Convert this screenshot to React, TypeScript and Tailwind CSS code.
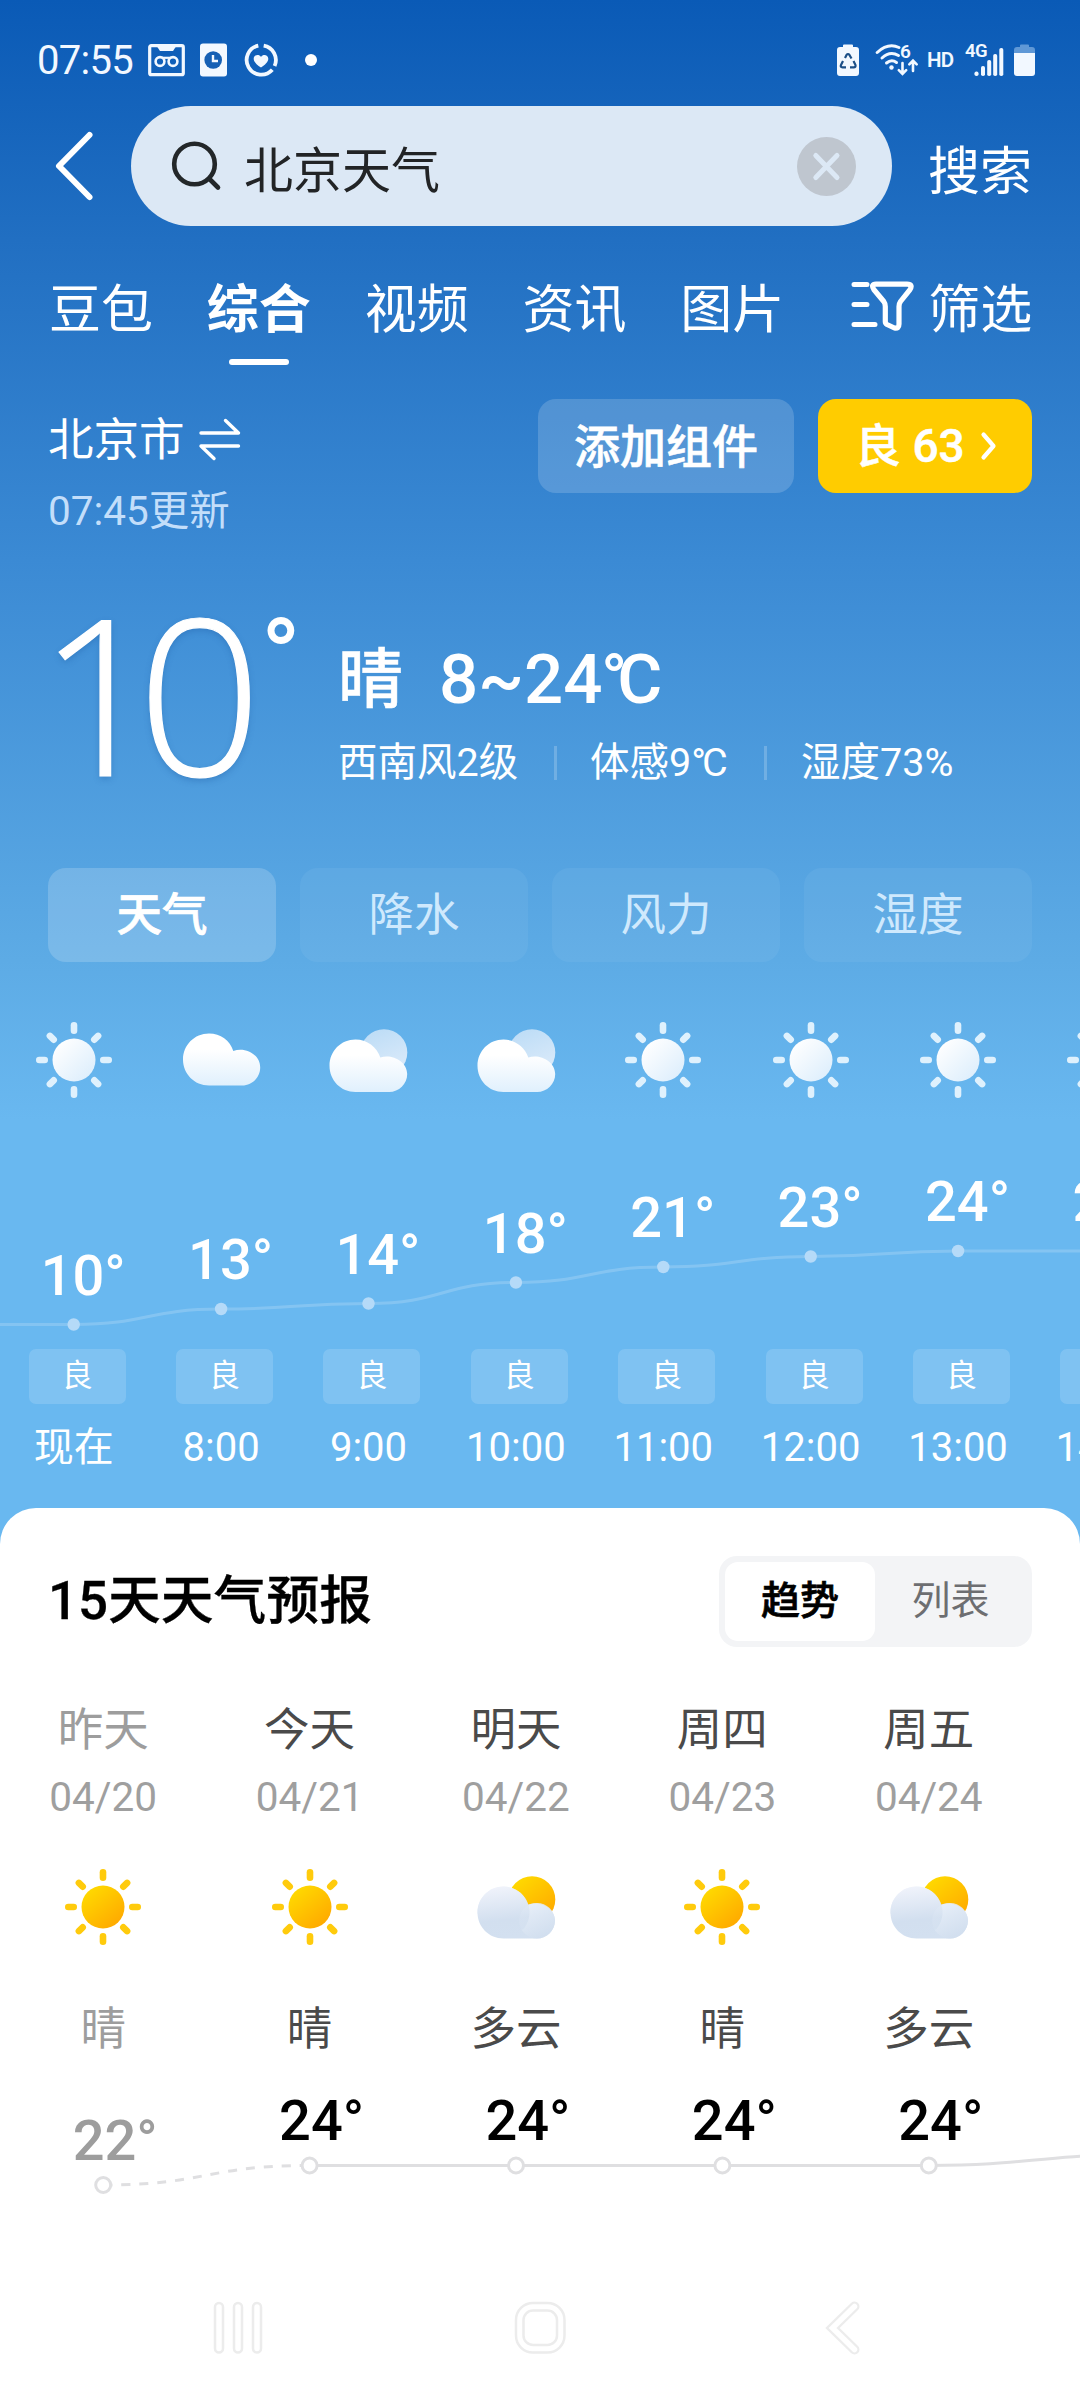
import React from "react";

const HOUR_PITCH = 147.4;
const DAY_PITCH = 206.4;

type IconKind = "sun" | "cloud" | "partly";

const hours: { icon: IconKind; temp: string; time: string; y: number }[] = [
  { icon: "sun", temp: "10°", time: "现在", y: 1324.5 },
  { icon: "cloud", temp: "13°", time: "8:00", y: 1309 },
  { icon: "partly", temp: "14°", time: "9:00", y: 1303.5 },
  { icon: "partly", temp: "18°", time: "10:00", y: 1282.5 },
  { icon: "sun", temp: "21°", time: "11:00", y: 1267 },
  { icon: "sun", temp: "23°", time: "12:00", y: 1256.5 },
  { icon: "sun", temp: "24°", time: "13:00", y: 1251 },
  { icon: "sun", temp: "24°", time: "14:00", y: 1251 },
];

const days: { name: string; date: string; icon: IconKind; text: string; temp: string; y: number; past?: boolean }[] = [
  { name: "昨天", date: "04/20", icon: "sun", text: "晴", temp: "22°", y: 2185, past: true },
  { name: "今天", date: "04/21", icon: "sun", text: "晴", temp: "24°", y: 2165.5 },
  { name: "明天", date: "04/22", icon: "partly", text: "多云", temp: "24°", y: 2165.5 },
  { name: "周四", date: "04/23", icon: "sun", text: "晴", temp: "24°", y: 2165.5 },
  { name: "周五", date: "04/24", icon: "partly", text: "多云", temp: "24°", y: 2165.5 },
];

function smooth(points: [number, number][]) {
  return points
    .map(([x, y], i) => {
      if (i === 0) return `M${x} ${y}`;
      const [px, py] = points[i - 1];
      const mx = (px + x) / 2;
      return `C${mx} ${py} ${mx} ${y} ${x} ${y}`;
    })
    .join(" ");
}

function Gradients() {
  return (
    <svg className="absolute h-0 w-0">
      <defs>
        <linearGradient id="sunWhite" x1="0.1" y1="0.1" x2="0.9" y2="0.9">
          <stop offset="0" stopColor="#ffffff" />
          <stop offset="1" stopColor="#ddeefc" />
        </linearGradient>
        <linearGradient id="cloudWhite" x1="0" y1="0" x2="0" y2="1">
          <stop offset="0.3" stopColor="#ffffff" />
          <stop offset="1" stopColor="#e0f0fd" />
        </linearGradient>
        <linearGradient id="moon" x1="0.2" y1="0" x2="0.6" y2="1">
          <stop offset="0" stopColor="#bcdcf6" />
          <stop offset="1" stopColor="#dcebfa" />
        </linearGradient>
        <linearGradient id="sunGold" x1="0.15" y1="0.1" x2="0.85" y2="0.95">
          <stop offset="0" stopColor="#ffd900" />
          <stop offset="1" stopColor="#ffa800" />
        </linearGradient>
        <linearGradient id="cloudGrey" gradientUnits="userSpaceOnUse" x1="26" y1="19" x2="32" y2="71">
          <stop offset="0" stopColor="#f0f3fb" />
          <stop offset="0.65" stopColor="#d2dfef" />
          <stop offset="1" stopColor="#d3e0f0" />
        </linearGradient>
        <linearGradient id="puffGrey" x1="0" y1="0" x2="0.5" y2="1">
          <stop offset="0" stopColor="#edf3fb" />
          <stop offset="1" stopColor="#d2dfef" />
        </linearGradient>
      </defs>
    </svg>
  );
}

function Sun({ gold = false }: { gold?: boolean }) {
  return (
    <svg width="80" height="80" viewBox="0 0 80 80">
      <circle cx="40" cy="40" r="21.5" fill={gold ? "url(#sunGold)" : "url(#sunWhite)"} />
      {[0, 45, 90, 135, 180, 225, 270, 315].map((a) => (
        <rect
          key={a}
          x="36.7"
          y={a % 90 === 0 ? 2 : 2.6}
          width="6.6"
          height="12"
          rx="3.3"
          fill={gold ? "#ffcb0c" : "#dff1fd"}
          transform={`rotate(${a} 40 40)`}
        />
      ))}
    </svg>
  );
}

function Cloud() {
  return (
    <svg width="80" height="80" viewBox="0 0 80 80">
      <path
        d="M28 13.5 C39.5 13.5 49 20.500 52.300 31 C63.500 26.500 79.200 34 79.200 47.500 C79.200 57.500 71 65.500 61 65.500 H28 C13.500 65.500 2 54 2 39.500 C2 25 13.500 13.500 28 13.500 Z"
        fill="url(#cloudWhite)"
      />
    </svg>
  );
}

function Partly({ gold = false }: { gold?: boolean }) {
  return (
    <svg width="80" height="80" viewBox="0 0 80 80">
      <circle cx="56" cy="32.500" r="23.300" fill={gold ? "url(#sunGold)" : "url(#moon)"} />
      {gold ? (
        <>
          <path
            d="M27.500 19.500 C39 19.500 49 27 52 37.500 C63 33.500 79 40.500 79 53.500 C79 63.500 71 71.500 61 71.500 H27.500 C13 71.500 1.500 60 1.500 45.500 C1.500 31 13 19.500 27.500 19.500 Z"
            fill="url(#cloudGrey)"
          />
          <circle cx="61" cy="53.700" r="17.800" fill="url(#puffGrey)" opacity="0.85" />
          <path
            d="M27.500 19.500 C42 19.500 53.500 31 53.500 45.500 C53.500 52 51 58 47 62.500 H20 C6 55 1.500 48 1.500 45.500 C1.500 31 13 19.500 27.500 19.500 Z"
            fill="url(#cloudGrey)"
            opacity="0.75"
          />
        </>
      ) : (
        <path
          d="M27.500 19.500 C39 19.500 49 27 52.300 37.500 C63 33.500 79.200 40.500 79.200 54 C79.200 64 71 72 61 72 H27.500 C13 72 1.500 60.500 1.500 45.750 C1.500 31 13 19.500 27.500 19.500 Z"
          fill="url(#cloudWhite)"
        />
      )}
    </svg>
  );
}

function WeatherIcon({ kind, gold }: { kind: IconKind; gold?: boolean }) {
  if (kind === "sun") return <Sun gold={gold} />;
  if (kind === "cloud") return <Cloud />;
  return <Partly gold={gold} />;
}

function StatusBar() {
  return (
    <div className="flex h-[106px] items-center pt-[14px] pr-[45px] pl-[37px] text-[#f2f8ff]">
      <span className="w-[111px] pt-[1px] text-[40px] leading-[48px] tracking-[-0.7px]">07:55</span>
      <svg width="37" height="34" viewBox="0 0 37 34" fill="none" stroke="currentColor">
        <rect x="1.700" y="2.700" width="33.600" height="29" rx="1.500" strokeWidth="3.200" />
        <path d="M9 3.500h19l-3 4.500H12z" fill="currentColor" stroke="none" />
        <circle cx="12" cy="18.500" r="4.400" strokeWidth="2.600" />
        <circle cx="25" cy="18.500" r="4.400" strokeWidth="2.600" />
        <path d="M14 14.800h9" strokeWidth="2.200" />
      </svg>
      <svg className="ml-[15px]" width="27" height="34" viewBox="0 0 27 34">
        <rect width="27" height="33" y="0.500" rx="3" fill="currentColor" />
        <circle cx="13.200" cy="17" r="8.800" fill="#1560b5" />
        <path d="M13 12v6h5" fill="none" stroke="currentColor" strokeWidth="2.400" />
      </svg>
      <svg className="ml-[17px]" width="34" height="34" viewBox="0 0 34 34" fill="none" stroke="currentColor" strokeWidth="3.800">
        <path d="M14.300 2.600A14.700 14.700 0 1 0 28.300 26.800" />
        <path d="M19.700 2.600A14.700 14.700 0 0 1 30.600 23" />
        <path
          d="M17 24.500c-4-2.600-7.300-5.500-7.300-8.700 0-4.200 5.300-5.300 7.300-1.900 2-3.400 7.300-2.300 7.300 1.900 0 3.200-3.300 6.100-7.300 8.700z"
          fill="currentColor"
          stroke="none"
        />
      </svg>
      <span className="ml-[27px] h-[12px] w-[12px] rounded-full bg-white" />
      <div className="ml-auto flex items-center">
        <svg width="22" height="33" viewBox="0 0 22 33">
          <path d="M6 1.500q0-1 1-1h8q1 0 1 1V3h3q3 0 3 3v23q0 3-3 3H3q-3 0-3-3V6q0-3 3-3h3z" fill="currentColor" />
          <path
            d="M8 14l1.500-3q1.500-2 3 0l2 3.500M16.500 17l2 4q.5 2.300-1.800 2.300H13M9 23.300H5.500Q3 23.300 4 21l2-4"
            fill="none"
            stroke="#1c4f87"
            strokeWidth="2.200"
          />
        </svg>
        <div className="relative ml-[16px] h-[34px] w-[44px]">
          <svg width="44" height="34" viewBox="0 0 44 34" fill="none" stroke="currentColor" strokeLinecap="round">
            <path d="M2.200 9.500Q13 -0.500 24 4.500" strokeWidth="3" />
            <path d="M7 15Q15 7.500 23.500 12.500" strokeWidth="3" />
            <path d="M11.500 20Q16.500 15.800 21.500 19.500" strokeWidth="3" />
            <circle cx="16.500" cy="24.500" r="2.200" fill="currentColor" stroke="none" />
            <path d="M27.500 20v10.500M23.800 27.200l3.700 3.800 3.700-3.800M38 28V18M34.300 21.300L38 17.500l3.700 3.800" strokeWidth="2.600" />
          </svg>
          <span className="absolute top-[-3px] left-[25px] text-[19px] leading-[24px] font-semibold">6</span>
        </div>
        <span className="ml-[8px] w-[38px] text-[20.500px] leading-[26px] font-semibold tracking-[-0.800px]">HD</span>
        <div className="relative h-[34px] w-[40px]">
          <span className="absolute top-[-4px] left-0 text-[18.500px] leading-[24px] font-semibold tracking-[-0.500px]">4G</span>
          <svg width="40" height="34" viewBox="0 0 40 34" fill="currentColor">
            <rect x="9.500" y="28.500" width="4" height="4.500" rx="1.800" />
            <rect x="16" y="23" width="4" height="10" rx="1.800" />
            <rect x="22.200" y="17" width="4" height="16" rx="1.800" />
            <rect x="28.200" y="11" width="4" height="22" rx="1.800" />
            <rect x="34.300" y="5" width="4" height="28" rx="1.800" />
          </svg>
        </div>
        <svg className="ml-[9px]" width="21" height="33" viewBox="0 0 21 33">
          <path d="M6 1.500q0-1 1-1h7q1 0 1 1V3h3q3 0 3 3v3H0V6q0-3 3-3h3z" fill="#5f98d6" />
          <path d="M0 9h21v20q0 3-3 3H3q-3 0-3-3z" fill="currentColor" />
        </svg>
      </div>
    </div>
  );
}

function SearchBar() {
  return (
    <div className="flex h-[120px] items-center">
      <svg
        className="ml-[52px]"
        width="44"
        height="76"
        viewBox="0 0 44 76"
        fill="none"
        stroke="#fff"
        strokeWidth="6"
        strokeLinecap="round"
        strokeLinejoin="round"
      >
        <path d="M37.500 7L7 38L37.500 69" />
      </svg>
      <div className="ml-[35px] flex h-[120px] w-[761px] items-center rounded-full bg-[#dce8f5] pr-[36px] pl-[39px]">
        <svg width="56" height="56" viewBox="0 0 56 56" fill="none" stroke="#232729" strokeWidth="4.600" strokeLinecap="round">
          <circle cx="24.500" cy="26" r="20.300" />
          <path d="M39.500 41L48 49.500" />
        </svg>
        <span className="mt-[11px] ml-[18px] text-[49px] leading-[60px] text-[#222426]">北京天气</span>
        <svg className="ml-auto" width="59" height="59" viewBox="0 0 59 59">
          <circle cx="29.500" cy="29.500" r="29.500" fill="#bfc6cf" />
          <path d="M18.800 18.500L40 40.500M40 18.500L18.800 40.500" stroke="#dce8f5" strokeWidth="5" strokeLinecap="round" />
        </svg>
      </div>
      <span className="mt-[13px] ml-[36px] text-[52px] leading-[60px] whitespace-nowrap text-white">搜索</span>
    </div>
  );
}

function ChannelTabs() {
  return (
    <div className="flex h-[173px] items-start pt-[59px] pl-[49px] text-[52px] leading-[52px] text-white">
      <div className="flex gap-[53.800px]">
        {["豆包", "综合", "视频", "资讯", "图片"].map((t) => (
          <div key={t} className="flex flex-col items-center whitespace-nowrap">
            {t === "综合" ? <span className="font-bold">{t}</span> : <span>{t}</span>}
            {t === "综合" && <span className="mt-[22px] h-[6px] w-[60px] rounded-full bg-white" />}
          </div>
        ))}
      </div>
      <svg
        className="-mt-[7px] ml-[66px]"
        width="64"
        height="54"
        viewBox="0 0 64 54"
        fill="none"
        stroke="#fff"
        strokeWidth="5.200"
        strokeLinecap="round"
        strokeLinejoin="round"
      >
        <path d="M4 6.500H17M4 26.500H17M4 46.500H25" strokeWidth="5" />
        <path d="M26 6.200H57Q63.500 6.200 59.800 11.800L50.500 23.500Q49 25.500 49 28.500V46Q49 51 44.500 50L37 46.500Q35.300 45.500 35.300 43.500V28.500Q35.300 25.500 33.800 23.500L23.800 11.500Q20.500 6.200 26 6.200Z" />
      </svg>
      <span className="ml-[14px] whitespace-nowrap">筛选</span>
    </div>
  );
}

function CityRow() {
  return (
    <div className="flex h-[161px] items-start px-[48px] text-white">
      <div>
        <div className="flex h-[45px] items-center pt-[38px]">
          <span className="text-[45.500px] leading-none">北京市</span>
          <svg
            className="-mt-[3px] ml-[12px]"
            width="46"
            height="44"
            viewBox="0 0 46 44"
            fill="none"
            stroke="#fff"
            strokeWidth="3.400"
            strokeLinecap="round"
            strokeLinejoin="round"
          >
            <path d="M4 16H41.500L28.500 3.500M41.500 29H4L17 41.500" />
          </svg>
        </div>
        <div className="mt-[47px] text-[40.500px] leading-none text-[#c3defa]">07:45更新</div>
      </div>
      <div className="ml-auto flex gap-[24px]">
        <button className="flex h-[94px] w-[256px] items-center justify-center rounded-[18px] bg-white/[0.17] pt-[1px] text-[46px] leading-none font-medium [-webkit-text-stroke:0.6px_#fff]">
          添加组件
        </button>
        <button className="flex h-[94px] w-[214px] items-center rounded-[18px] bg-[#ffcc00] pl-[37px] text-[46px] leading-none font-medium whitespace-pre">
          <span className="[-webkit-text-stroke:0.5px_#fff]">良 63</span>
          <svg
            className="ml-[15px]"
            width="20"
            height="34"
            viewBox="0 0 20 34"
            fill="none"
            stroke="#fff"
            strokeWidth="4.200"
            strokeLinecap="round"
            strokeLinejoin="round"
          >
            <path d="M3.500 5.500L13.500 17L3.500 28.500" />
          </svg>
        </button>
      </div>
    </div>
  );
}

function Current() {
  return (
    <div className="flex h-[308px] items-start text-white">
      <div className="flex w-[338px] items-start pl-[38px]">
        <span className="mt-[23px] w-[223px] font-['Open_Sans'] text-[218px] leading-[218px] font-light tracking-[-25px] [-webkit-text-stroke:1.2px_#fff] [text-shadow:0_3px_6px_rgba(30,90,160,0.35)]">
          10
        </span>
        <span className="mt-[45px] text-[104px] leading-none font-medium">°</span>
      </div>
      <div className="pt-[84px]">
        <div className="flex h-[70px] items-center font-medium">
          <span className="w-[101px] pt-[3px] text-[65px] leading-none [-webkit-text-stroke:0.5px_#fff]">晴</span>
          <span className="text-[69px] leading-none">
            8~2<span className="tracking-[-1.500px]">4</span>
            <span className="tracking-[-10px]">°</span>C
          </span>
        </div>
        <div className="mt-[27px] flex h-[44px] items-center text-[39.500px] leading-none whitespace-nowrap">
          <span className="w-[216px]">西南风2级</span>
          <span className="h-[34px] w-[3px] bg-white/20" />
          <span className="w-[207px] pl-[33px]">
            体感9<span className="tracking-[-4px]">°</span>C
          </span>
          <span className="h-[34px] w-[3px] bg-white/20" />
          <span className="pl-[34px]">湿度73%</span>
        </div>
      </div>
    </div>
  );
}

function MetricTabs() {
  return (
    <div className="grid h-[94px] grid-cols-4 gap-[24px] px-[48px] text-[45.500px] leading-none text-white">
      <div className="flex items-center justify-center rounded-[18px] bg-white/[0.18] pt-[2px] font-medium [-webkit-text-stroke:0.7px_#fff]">
        天气
      </div>
      {["降水", "风力", "湿度"].map((t) => (
        <div key={t} className="flex items-center justify-center rounded-[18px] bg-white/[0.05] pt-[2px]">
          <span className="text-[#cfe9fd]">{t}</span>
        </div>
      ))}
    </div>
  );
}

function Hourly() {
  const pts = hours.map((h, i) => [73.7 + i * HOUR_PITCH, h.y - 962] as [number, number]);
  return (
    <div className="relative h-[546px] overflow-hidden text-white">
      <svg className="absolute top-0 left-0" width="1080" height="546" fill="none">
        <path d={smooth([[-60, pts[0][1]], ...pts])} stroke="#ffffff" strokeOpacity="0.18" strokeWidth="3" />
        {pts.map(([x, y]) => (
          <circle key={x} cx={x} cy={y} r="6.200" fill="#b5daf8" />
        ))}
      </svg>
      <div className="flex">
        {hours.map((h) => (
          <div key={h.time} className="flex h-[546px] w-[147.400px] shrink-0 flex-col items-center">
            <div className="mt-[58px]">
              <WeatherIcon kind={h.icon} />
            </div>
            <div className="h-[249px]">
              <div className="pl-[19px] text-[56px] leading-[56px] font-medium" style={{ paddingTop: h.y - 962 - 138 - 77 }}>
                {h.temp}
              </div>
            </div>
            <div className="ml-[7px] flex h-[55px] w-[97px] items-center justify-center rounded-[7px] bg-white/[0.15] pb-[2px] text-[31px] leading-none">
              <span>良</span>
            </div>
            <div className="mt-[24px] text-[40px] leading-[40px] whitespace-nowrap">{h.time}</div>
          </div>
        ))}
      </div>
    </div>
  );
}

function Forecast() {
  const pts = days.map((d, i) => [103.2 + i * DAY_PITCH, d.y - 1508] as [number, number]);
  return (
    <div className="relative h-[752px] rounded-t-[36px] bg-white">
      <div className="flex h-[181px] items-start justify-between px-[48px]">
        <h2 className="pt-[67px] text-[52.800px] leading-none font-medium text-black [-webkit-text-stroke:0.3px_#000]">15天天气预报</h2>
        <div className="mt-[48px] flex h-[91px] w-[313px] rounded-[18px] bg-[#f3f4f6] p-[6px] text-[39px] leading-none">
          <div className="flex w-[150px] items-center justify-center rounded-[13px] bg-white pb-[1px] font-medium text-black [-webkit-text-stroke:0.7px_#000]">
            趋势
          </div>
          <div className="flex flex-1 items-center justify-center pb-[1px] text-[#6d6e71]">列表</div>
        </div>
      </div>
      <svg className="absolute top-0 left-0" width="1080" height="752" fill="none" stroke="#dfdfe1" strokeWidth="3">
        <path d={smooth([pts[0], pts[1]])} strokeDasharray="9 9" />
        <path d={smooth([...pts.slice(1), [1135, 647]])} />
        {pts.map(([x, y]) => (
          <circle key={x} cx={x} cy={y} r="7.500" fill="#fff" />
        ))}
      </svg>
      <div className="flex">
        {days.map((d) => (
          <div key={d.name} className="flex w-[206.400px] shrink-0 flex-col items-center text-[#4a4a4a]">
            <div className="mt-[19px] text-[45.500px] leading-[46px]">{d.past ? <span className="text-[#9d9d9d]">{d.name}</span> : d.name}</div>
            <div className="mt-[23px] text-[40.500px] leading-[40px] text-[#9f9f9f]">{d.date}</div>
            <div className="mt-[50px]">
              <WeatherIcon kind={d.icon} gold />
            </div>
            <div className="mt-[60px] text-[45.500px] leading-[46px]">{d.past ? <span className="text-[#9d9d9d]">{d.text}</span> : d.text}</div>
            <div className="pl-[24px] text-[56px] leading-[56px] font-medium" style={{ paddingTop: d.y - 2125.5 }}>
              {d.past ? <span className="text-[#9d9d9d]">{d.temp}</span> : <span className="text-black">{d.temp}</span>}
            </div>
          </div>
        ))}
      </div>
    </div>
  );
}

function NavBar() {
  return (
    <div className="flex h-[140px] items-center bg-white pb-[5px] text-[#ececec]">
      <svg className="ml-[212px]" width="52" height="56" viewBox="0 0 52 56" fill="none" stroke="currentColor" strokeWidth="2.500">
        <rect x="3" y="3" width="8" height="49.500" rx="4" />
        <rect x="22" y="3" width="8" height="49.500" rx="4" />
        <rect x="41" y="3" width="8" height="49.500" rx="4" />
      </svg>
      <svg className="ml-[248px]" width="56" height="56" viewBox="0 0 56 56" fill="none" stroke="currentColor" strokeWidth="2.500">
        <rect x="4" y="3" width="48.500" height="49.500" rx="17" />
        <rect x="11.500" y="10.500" width="33.500" height="34.500" rx="9.500" />
      </svg>
      <svg className="ml-[255px]" width="40" height="58" viewBox="0 0 40 58" fill="none" strokeLinecap="round">
        <path d="M31.500 7.500L9.500 29L31.500 50.500" stroke="currentColor" strokeWidth="10" />
        <path d="M31.500 7.500L9.500 29L31.500 50.500" stroke="#fff" strokeWidth="5.500" />
      </svg>
    </div>
  );
}

export default function App() {
  return (
    <div className="relative h-[2400px] w-[1080px] overflow-hidden bg-[linear-gradient(180deg,#0a5ab6_0px,#216fc2_240px,#3b8ad4_560px,#5dabe5_960px,#69b8f0_1120px)] font-[Roboto,'Noto_Sans_CJK_SC',sans-serif]">
      <Gradients />
      <StatusBar />
      <SearchBar />
      <ChannelTabs />
      <CityRow />
      <Current />
      <MetricTabs />
      <Hourly />
      <Forecast />
      <NavBar />
    </div>
  );
}
